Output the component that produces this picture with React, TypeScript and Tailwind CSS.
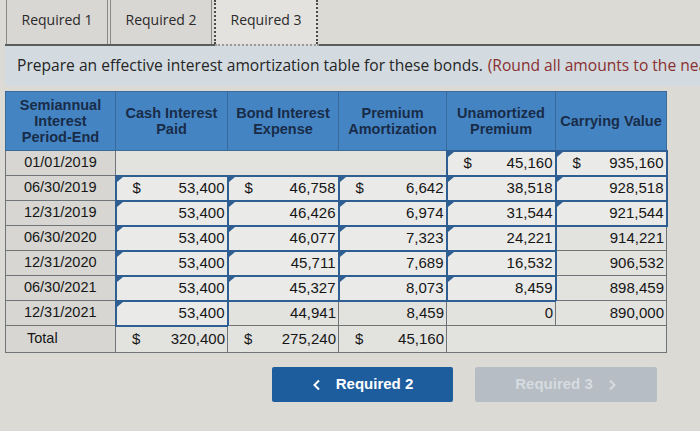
import * as React from 'react';

type Cell = { v?: string; dollar?: boolean; input?: boolean; span?: number; empty?: boolean };

interface Row {
  date: string;
  cells: Cell[];
  total?: boolean;
}

const rows: Row[] = [
  {
    date: '01/01/2019',
    cells: [
      { empty: true, span: 3 },
      { v: '45,160', dollar: true, input: true },
      { v: '935,160', dollar: true, input: true },
    ],
  },
  {
    date: '06/30/2019',
    cells: [
      { v: '53,400', dollar: true, input: true },
      { v: '46,758', dollar: true, input: true },
      { v: '6,642', dollar: true, input: true },
      { v: '38,518', input: true },
      { v: '928,518', input: true },
    ],
  },
  {
    date: '12/31/2019',
    cells: [
      { v: '53,400', input: true },
      { v: '46,426', input: true },
      { v: '6,974', input: true },
      { v: '31,544', input: true },
      { v: '921,544', input: true },
    ],
  },
  {
    date: '06/30/2020',
    cells: [
      { v: '53,400', input: true },
      { v: '46,077', input: true },
      { v: '7,323', input: true },
      { v: '24,221', input: true },
      { v: '914,221' },
    ],
  },
  {
    date: '12/31/2020',
    cells: [
      { v: '53,400', input: true },
      { v: '45,711', input: true },
      { v: '7,689', input: true },
      { v: '16,532', input: true },
      { v: '906,532' },
    ],
  },
  {
    date: '06/30/2021',
    cells: [
      { v: '53,400', input: true },
      { v: '45,327', input: true },
      { v: '8,073', input: true },
      { v: '8,459', input: true },
      { v: '898,459' },
    ],
  },
  {
    date: '12/31/2021',
    cells: [
      { v: '53,400', input: true },
      { v: '44,941' },
      { v: '8,459' },
      { v: '0' },
      { v: '890,000' },
    ],
  },
  {
    date: 'Total',
    total: true,
    cells: [
      { v: '320,400', dollar: true },
      { v: '275,240', dollar: true },
      { v: '45,160', dollar: true },
      { empty: true, span: 2 },
    ],
  },
];

const headers = [
  ['Semiannual', 'Interest', 'Period-End'],
  ['Cash Interest', 'Paid'],
  ['Bond Interest', 'Expense'],
  ['Premium', 'Amortization'],
  ['Unamortized', 'Premium'],
  ['Carrying Value'],
];

const colWidths = ['w-[110px]', 'w-[112px]', 'w-[111px]', 'w-[108px]', 'w-[109px]', 'w-[111px]'];

function Tab({ label, active }: { label: string; active?: boolean }) {
  return (
    <div
      className={
        active
          ? 'flex h-[44px] w-[104px] items-center justify-center border-x-2 border-dotted border-[#4a4a4a] bg-[#e3e2de]'
          : 'flex h-[44px] w-[102px] items-center justify-center border-x border-[#8a8a88] bg-[#d9d7d3]'
      }
    >
      <span className="pb-[6px] text-[14px] text-[#2a2a2a]">{label}</span>
    </div>
  );
}

function DataCell({ cell }: { cell: Cell }) {
  if (cell.empty) {
    return <td colSpan={cell.span} className="border border-[#6f7479] bg-[#e2e2df]" />;
  }
  return (
    <td
      className={
        cell.input
          ? 'relative h-[25px] border-2 border-[#2f5f92] bg-[#eaeae8] p-0'
          : 'relative h-[25px] border border-[#6f7479] bg-[#e2e2df] p-0'
      }
    >
      {cell.input && (
        <span className="absolute left-0 top-0 h-0 w-0 border-l-[6px] border-b-[5px] border-l-[#2f5f92] border-b-transparent" />
      )}
      <div className="flex items-center justify-between pl-[16px] pr-[2px] text-[15px] text-[#161616]">
        <span>{cell.dollar ? '$' : ''}</span>
        <span>{cell.v}</span>
      </div>
    </td>
  );
}

export default function App() {
  return (
    <div
      className="h-[431px] w-[700px] overflow-hidden bg-[#dcdad5]"
      style={{ fontFamily: '"Liberation Sans", Arial, sans-serif' }}
    >
      <div className="flex items-end pl-[6px]" style={{ fontFamily: '"Open Sans", sans-serif' }}>
        <div className="flex gap-[2px]">
          <Tab label="Required 1" />
          <Tab label="Required 2" />
          <Tab label="Required 3" active />
        </div>
      </div>
      <div className="ml-[5px] flex">
        <div className="h-[2px] w-[210px] bg-[#5c5c5c]" />
        <div className="h-[2px] w-[104px] border-b-2 border-dotted border-[#9a9a9a]" />
        <div className="h-[2px] flex-1 bg-[#5c5c5c]" />
      </div>
      <div
        className="ml-[5px] flex h-[40px] items-center overflow-hidden whitespace-nowrap bg-[#d3dbe0] pl-[12px] text-[15.6px] text-[#252525]"
        style={{ fontFamily: '"Open Sans", sans-serif' }}
      >
        Prepare an effective interest amortization table for these bonds.{' '}
        <span className="ml-[5px] text-[#8a2f2f]">(Round all amounts to the nearest dollar.)</span>
      </div>
      <div className="ml-[5px] mt-[5px]">
        <table className="table-fixed border-collapse">
          <thead>
            <tr>
              {headers.map((h, i) => (
                <th
                  key={i}
                  className={`${colWidths[i]} h-[59px] border border-[#3a6a99] bg-[#4584c3] p-0 text-center align-middle text-[14.5px] font-bold leading-[16px] text-[#182c48]`}
                >
                  {h.map((line) => (
                    <div key={line}>{line}</div>
                  ))}
                </th>
              ))}
            </tr>
          </thead>
          <tbody>
            {rows.map((r) => (
              <tr key={r.date}>
                <td
                  className={
                    r.total
                      ? 'h-[27px] border border-[#6f7479] bg-[#d7d6d2] pl-[21px] text-left text-[14.5px] text-[#161616]'
                      : 'h-[25px] border border-[#6f7479] bg-[#d7d6d2] text-center text-[14.5px] text-[#161616]'
                  }
                >
                  {r.date}
                </td>
                {r.cells.map((c, i) => (
                  <DataCell key={i} cell={c} />
                ))}
              </tr>
            ))}
          </tbody>
        </table>
      </div>
      <div className="mt-[14px] flex gap-[22px] pl-[272px]">
        <button className="flex h-[35px] w-[181px] items-center justify-center gap-[14px] rounded-[2px] bg-[#1d5d9e] text-[15px] font-bold text-white">
          <svg width="10" height="12" viewBox="0 0 10 12" fill="none">
            <path d="M7 1.5 2.5 6 7 10.5" stroke="white" strokeWidth="2" />
          </svg>
          Required 2
        </button>
        <button className="flex h-[35px] w-[182px] items-center justify-center gap-[14px] rounded-[2px] bg-[#b6bdc4] text-[15px] font-bold text-[#d6dbe0]">
          Required 3
          <svg width="10" height="12" viewBox="0 0 10 12" fill="none">
            <path d="M3 1.5 7.5 6 3 10.5" stroke="#d6dbe0" strokeWidth="2" />
          </svg>
        </button>
      </div>
    </div>
  );
}
